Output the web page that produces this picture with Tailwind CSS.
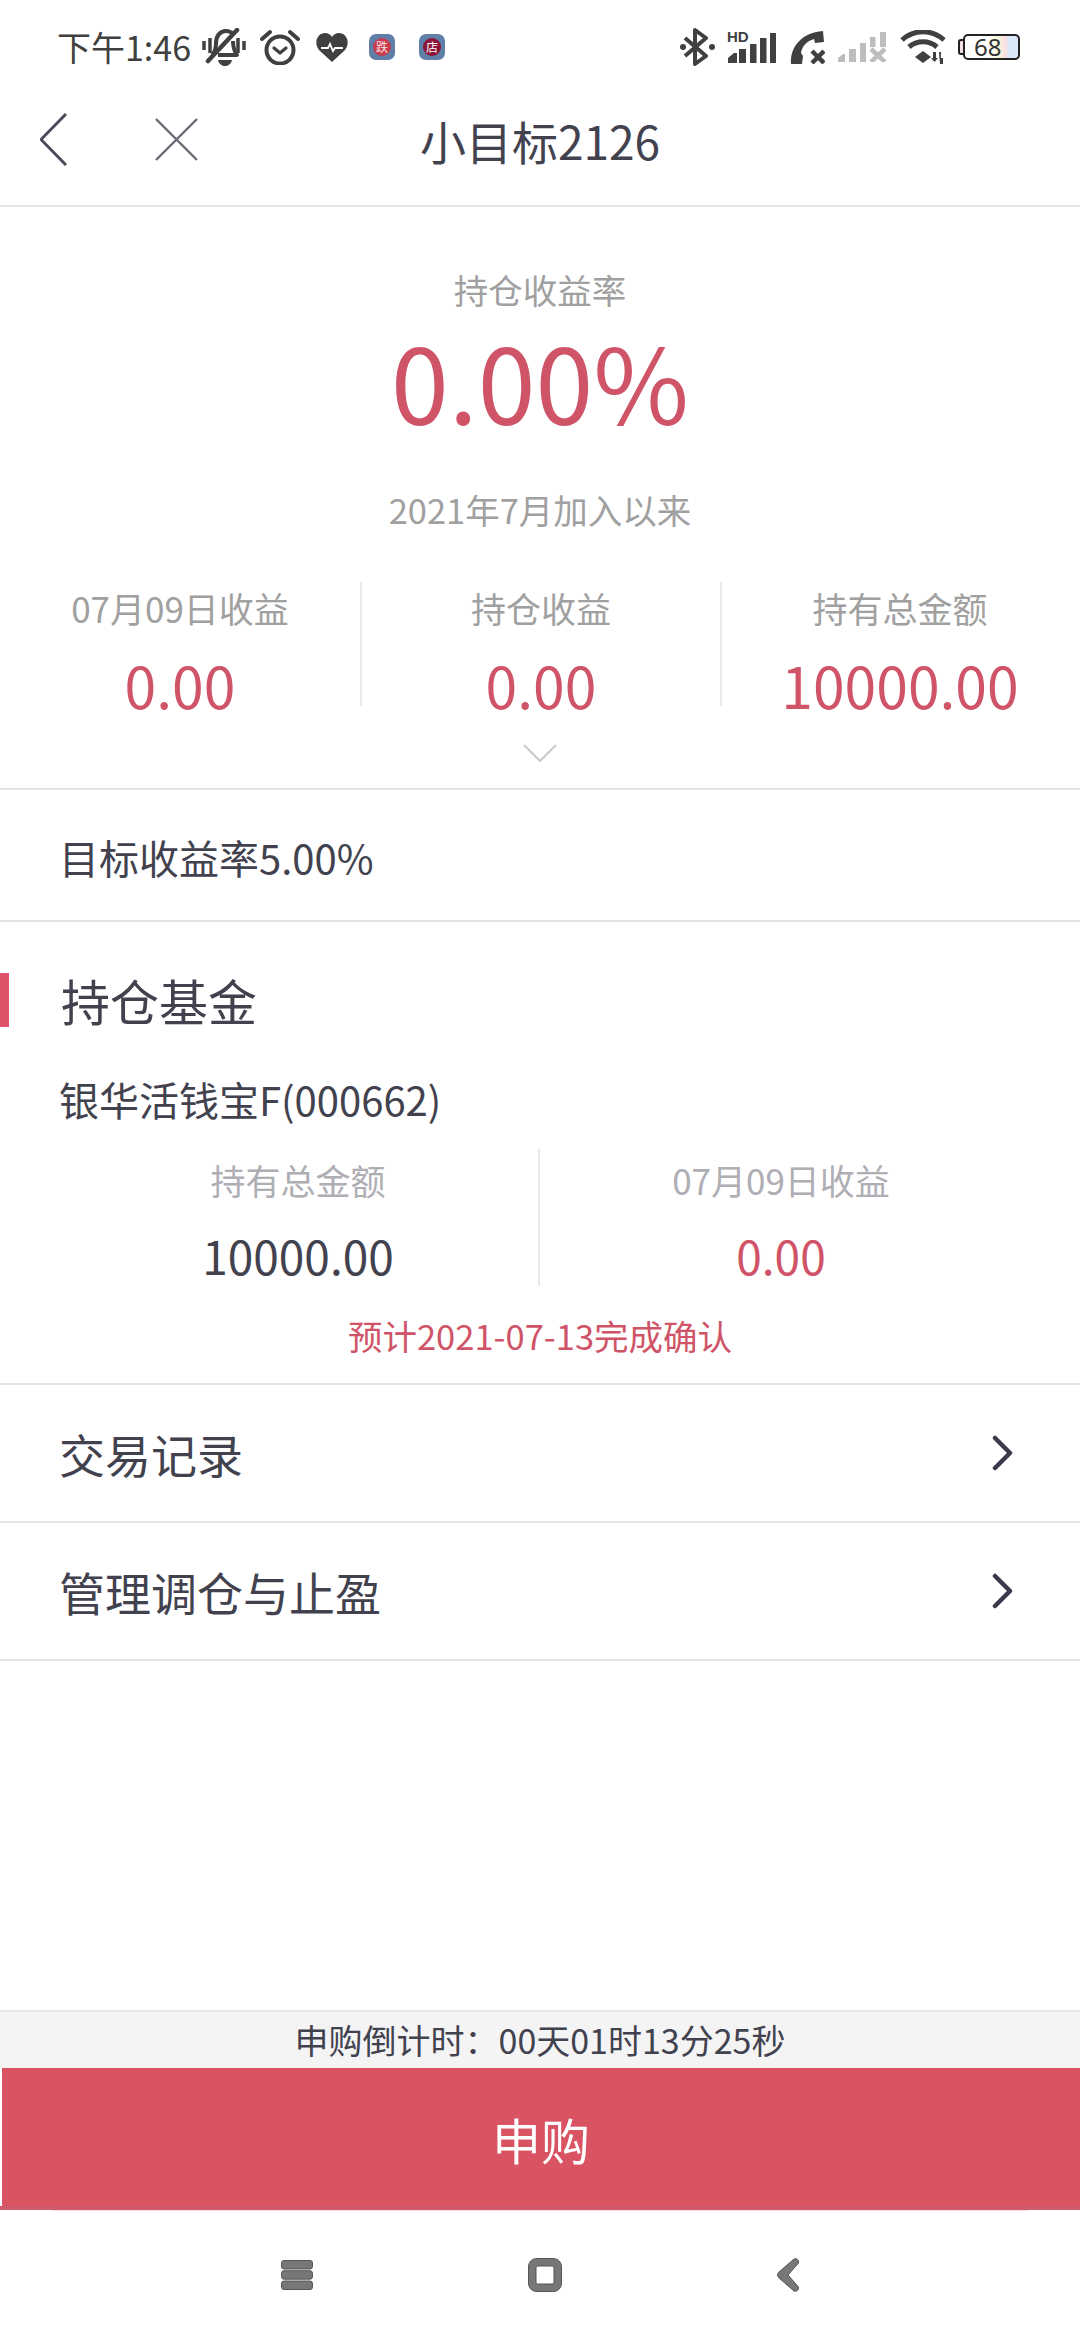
<!DOCTYPE html>
<html lang="zh-CN">
<head>
<meta charset="utf-8">
<script src="https://cdn.jsdelivr.net/npm/@tailwindcss/browser@4"></script>
</head>
<body class="m-0 bg-white">
<div class="w-[1080px] h-[2340px] flex flex-col bg-white overflow-hidden font-['Noto_Sans_CJK_SC','Noto_Sans',sans-serif] text-[#42424f]">
  <!-- status bar -->
  <div class="h-[60px] shrink-0 flex items-start justify-between pl-[57px] pr-[60px] pt-[25px] text-[#404040]">
    <div class="flex items-center h-[44px]">
      <span class="text-[34px] leading-[44px] whitespace-nowrap">下午1:46</span>
      <svg class="ml-[11px] w-[44px] h-[38px]" viewBox="0 0 44 38" fill="none" stroke="#404040" stroke-width="4"><path d="M10 27c3-3 4-7 4-12 0-7 4-12 10-12 3 0 5 1 7 3M31 13c0 6 1 10 4 14H16" stroke-linejoin="round"/><path d="M6 33 35 2" stroke-linecap="round" stroke-width="4.500"/><path d="M2 13v9M8 10v15M36 10v15M42 13v9" stroke-width="3.500"/><path d="M16 32h14c-1 4-4 6-7 6s-6-2-7-6z" fill="#404040" stroke="none"/></svg>
      <svg class="ml-[14px] w-[40px] h-[36px]" viewBox="0 0 40 36" fill="none" stroke="#404040" stroke-width="4"><circle cx="20" cy="21" r="13.500"/><path d="M14 19l6 5 6-5" stroke-width="3.200" stroke-linecap="round" stroke-linejoin="round"/><path d="M2 10 10 3M38 10 30 3" stroke-linecap="round"/></svg>
      <svg class="ml-[16px] w-[32px] h-[29px]" viewBox="0 0 32 29"><path d="M16 29 3 17C-3 9 2 0 9 0c3 0 5 1 7 4 2-3 4-4 7-4 7 0 12 9 6 17z" fill="#404040"/><path d="M5 15h7l2-4 3 7 2-3h8" fill="none" stroke="#fff" stroke-width="1.800"/></svg>
      <div class="ml-[21px] w-[26px] h-[26px] rounded-[7px] bg-[#5f7fa6] flex items-center justify-center"><span class="w-[18px] h-[18px] rounded-full bg-[#c93a4c] flex items-center justify-center text-[#fbe3e5] text-[12px] leading-none">跌</span></div>
      <div class="ml-[24px] w-[26px] h-[26px] rounded-[7px] bg-[#5f7fa6] flex items-center justify-center"><span class="w-[18px] h-[18px] rounded-full bg-[#8d1438] flex items-center justify-center text-white text-[12px] leading-none">店</span></div>
    </div>
    <div class="flex items-center h-[44px]">
      <svg class="w-[36px] h-[38px]" viewBox="0 0 36 38" fill="none" stroke="#404040" stroke-width="4"><path d="M6 10 27 28 16 36V2l11 8L6 28" stroke-linejoin="round"/><circle cx="4" cy="19" r="3" fill="#404040" stroke="none"/><circle cx="33" cy="19" r="3" fill="#404040" stroke="none"/></svg>
      <div class="ml-[11px] relative w-[50px] h-[32px]">
        <span class="absolute left-[1px] top-[-1px] font-['Liberation_Sans',sans-serif] text-[15px] font-bold leading-[13px] text-[#404040]">HD</span>
        <svg class="absolute left-0 top-0" width="50" height="32" viewBox="0 0 50 32" fill="#404040"><path d="M2 32v-5l6-5h3v10zM13 18h7v14h-7zM24 13h6.500v19H24zM34 7h6.500v25H34zM44 2h6v30h-6z"/></svg>
      </div>
      <svg class="ml-[14px] w-[35px] h-[33px]" viewBox="0 0 35 33"><path d="M1 33C0 16 11 2 33 0l1 11-9 1-1-4c-7 2-12 7-13 14l2 3-1 8z" fill="#404040"/><path d="M22 20l12 12M34 20 22 32" stroke="#404040" stroke-width="4.500"/></svg>
      <svg class="ml-[13px] w-[48px] h-[30px]" viewBox="0 0 48 30" fill="#bdbdbd"><path d="M0 30v-4l5-4h2v8zM11 17h7v13h-7zM22 11h6v19h-6zM32 5h5.500v10H32zM42 0h6v15h-6z"/><path d="M33 17l14 13M47 17 33 30" stroke="#bdbdbd" stroke-width="4.500"/></svg>
      <svg class="ml-[14px] w-[46px] h-[34px]" viewBox="0 0 46 34" fill="none" stroke="#404040" stroke-width="5"><path d="M2 10C14-1 32-1 44 10M9 17c8-7 20-7 28 0" stroke-linejoin="round"/><path d="M15 27l8-6 8 6-8 6z" fill="#404040" stroke="none"/><path d="M31 28l3.500 4 3.500-4h-2v-6h-3v6zM39 22h2v6h2v6h-3z" fill="#404040" stroke="none"/></svg>
      <div class="ml-[12px] flex items-center">
        <span class="w-[5px] h-[16px] border-2 border-r-0 border-[#222] rounded-l-[3px] bg-[#f6dfe8]"></span>
        <span class="w-[57px] h-[26px] border-2 border-[#222] rounded-[5px] bg-[linear-gradient(90deg,#fff_0%,#fff_45%,#f8f8d8_62%,#fbdfe0_76%,#dbe8f9_82%)] flex items-center pl-[9px] text-[#333] text-[24px] leading-none font-['Noto_Sans',sans-serif]">68</span>
      </div>
    </div>
  </div>
  <!-- nav -->
  <div class="h-[147px] shrink-0 border-b-2 border-[#e4e4e4] grid grid-cols-[1fr_auto_1fr] items-center pt-[14px]">
    <div class="flex items-center pl-[40px]">
      <svg class="w-[27px] h-[53px]" viewBox="0 0 27 53" fill="none" stroke="#4a4a58" stroke-width="3"><path d="M26 1 1 26.500 26 52"/></svg>
      <svg class="ml-[88px] w-[43px] h-[43px]" viewBox="0 0 43 43" fill="none" stroke="#6a6a76" stroke-width="2.400"><path d="M1 1l41 41M42 1 1 42"/></svg>
    </div>
    <div class="text-[46px] leading-[60px] whitespace-nowrap">小目标2126</div>
    <div></div>
  </div>
  <!-- yield -->
  <div class="h-[583px] shrink-0 border-b-2 border-[#e4e4e4] flex flex-col items-center pt-[59px]">
    <div class="text-[34.5px] leading-[46px] text-[#a0a0a0]">持仓收益率</div>
    <div class="mt-[8px] text-[104px] leading-[120px] text-[#d05468]">0.00%</div>
    <div class="mt-[46px] text-[34.5px] leading-[46px] text-[#a0a0a0]">2021年7月加入以来</div>
    <div class="mt-[50px] w-full grid grid-cols-3 grid-rows-[124px]">
      <div class="flex flex-col items-center pt-[3px]">
        <div class="text-[35px] leading-[46px] text-[#a0a0a0]">07月09日收益</div>
        <div class="mt-[18px] text-[57px] leading-[70px] text-[#d05468]">0.00</div>
      </div>
      <div class="flex flex-col items-center pt-[3px] border-x-2 border-[#e8e8e8] mr-[-2px]">
        <div class="text-[35px] leading-[46px] text-[#a0a0a0]">持仓收益</div>
        <div class="mt-[18px] text-[57px] leading-[70px] text-[#d05468]">0.00</div>
      </div>
      <div class="flex flex-col items-center pt-[3px]">
        <div class="text-[35px] leading-[46px] text-[#a0a0a0]">持有总金额</div>
        <div class="mt-[18px] text-[57px] leading-[70px] text-[#d05468]">10000.00</div>
      </div>
    </div>
    <svg class="mt-[38px] w-[34px] h-[18px]" viewBox="0 0 34 18" fill="none" stroke="#c9c9c9" stroke-width="2"><path d="M1 1l16 16L33 1"/></svg>
  </div>
  <!-- target -->
  <div class="h-[132px] shrink-0 border-b-2 border-[#e4e4e4] flex items-center pl-[59px] text-[40px] leading-[52px] pt-[4px]">目标收益率5.00%</div>
  <!-- holdings -->
  <div class="h-[463px] shrink-0 border-b-2 border-[#e4e4e4] flex flex-col">
    <div class="mt-[51px] flex items-center h-[54px]">
      <span class="w-[9px] h-[54px] bg-[#e05267]"></span>
      <span class="ml-[52px] text-[49px] leading-[54px]">持仓基金</span>
    </div>
    <div class="mt-[46px] pl-[59px] text-[40px] leading-[52px]">银华活钱宝F(000662)</div>
    <div class="mt-[24px] grid grid-cols-2 h-[137px] px-[58px]">
      <div class="flex flex-col items-center pt-[8px] border-r-2 border-[#e8e8e8]">
        <div class="text-[35px] leading-[46px] text-[#aeaeb4]">持有总金额</div>
        <div class="mt-[22px] text-[46px] leading-[60px]">10000.00</div>
      </div>
      <div class="flex flex-col items-center pt-[8px]">
        <div class="text-[35px] leading-[46px] text-[#aeaeb4]">07月09日收益</div>
        <div class="mt-[22px] text-[46px] leading-[60px] text-[#d05468]">0.00</div>
      </div>
    </div>
    <div class="mt-[26px] text-center text-[34.5px] leading-[46px] text-[#d05468]">预计2021-07-13完成确认</div>
  </div>
  <!-- links -->
  <div class="h-[138px] shrink-0 border-b-2 border-[#e4e4e4] flex items-center justify-between pl-[59px] pr-[66px]">
    <span class="text-[46px] leading-[60px]">交易记录</span>
    <svg class="w-[22px] h-[36px]" viewBox="0 0 22 36" fill="none" stroke="#3a3a4c" stroke-width="4.500" stroke-linecap="round" stroke-linejoin="round"><path d="M3 3l15 15L3 33"/></svg>
  </div>
  <div class="h-[138px] shrink-0 border-b-2 border-[#e4e4e4] flex items-center justify-between pl-[59px] pr-[66px]">
    <span class="text-[46px] leading-[60px]">管理调仓与止盈</span>
    <svg class="w-[22px] h-[36px]" viewBox="0 0 22 36" fill="none" stroke="#3a3a4c" stroke-width="4.500" stroke-linecap="round" stroke-linejoin="round"><path d="M3 3l15 15L3 33"/></svg>
  </div>
  <div class="flex-1"></div>
  <!-- countdown -->
  <div class="h-[58px] shrink-0 border-t-2 border-[#e8e8e8] bg-[#f4f4f5] flex items-center justify-center text-[34px] leading-[46px]">申购倒计时：00天01时13分25秒</div>
  <div class="h-[138px] shrink-0 border-l-2 border-white bg-[#d95363] flex items-center justify-center pt-[4px] text-white text-[49px] leading-[60px]">申购</div>
  <div class="h-[4px] shrink-0 bg-[#cf5a6c]"></div>
  <div class="h-[1px] shrink-0 mx-[52px] bg-[#f9dce0]"></div>
  <!-- nav bar -->
  <div class="flex-none h-[129px] flex justify-center items-start pt-[47px]">
    <div class="w-[518px] flex items-center justify-between h-[34px]">
      <svg class="w-[32px] h-[30px]" viewBox="0 0 32 30" fill="#777" stroke="#555" stroke-width="1"><rect x="0.500" y="0.500" width="31" height="8.500" rx="2.500"/><rect x="0.500" y="10.700" width="31" height="8.500" rx="2.500"/><rect x="0.500" y="21" width="31" height="8.500" rx="2.500"/></svg>
      <svg class="w-[34px] h-[34px]" viewBox="0 0 34 34"><path fill-rule="evenodd" d="M9 .500h16c5 0 8.500 3.500 8.500 8.500v16c0 5-3.500 8.500-8.500 8.500H9c-5 0-8.500-3.500-8.500-8.500V9C.5 4 4 .5 9 .5zM10 8c-1 0-2 1-2 2v14c0 1 1 2 2 2h14c1 0 2-1 2-2V10c0-1-1-2-2-2z" fill="#777" stroke="#555" stroke-width="1"/></svg>
      <svg class="w-[22px] h-[34px]" viewBox="0 0 22 34"><path d="M17 1c3-1 5 1 4.500 4L11 17l10.500 12c.5 3-2 5-4.500 4L2 20c-2-2-2-4 0-6z" fill="#777" stroke="#555" stroke-width="1"/></svg>
    </div>
  </div>
</div>
</body>
</html>
